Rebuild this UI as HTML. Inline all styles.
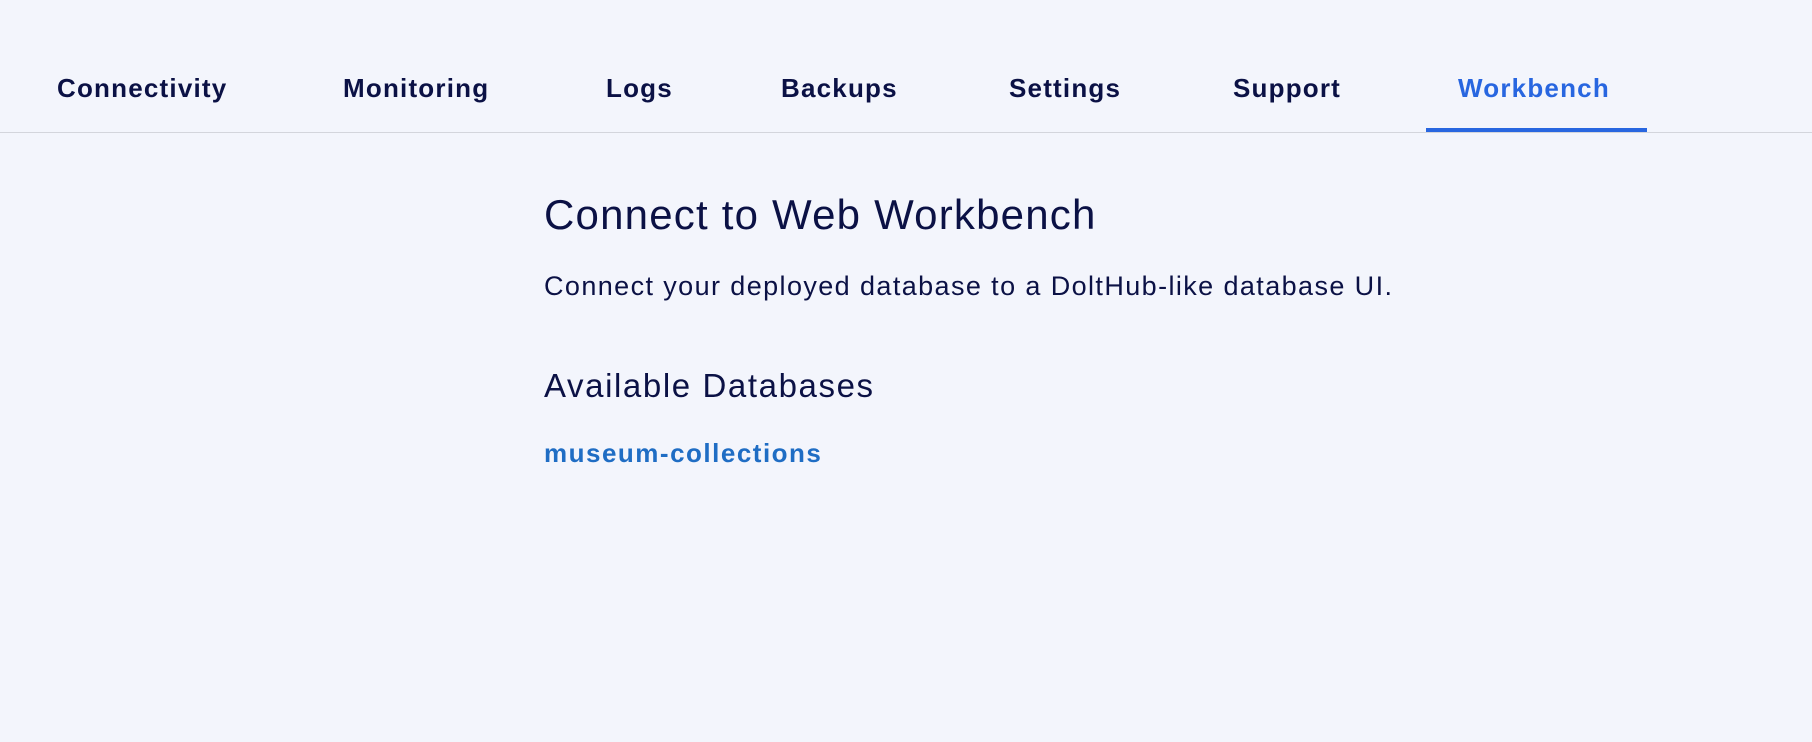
<!DOCTYPE html>
<html><head><meta charset="utf-8"><style>
html,body{margin:0;padding:0;width:1812px;height:742px;background:#f3f5fc;overflow:hidden;font-family:"Liberation Sans",sans-serif;color:#0b1145;}
.t{position:absolute;white-space:nowrap;line-height:1;}
.tab{font-weight:bold;font-size:26px;top:75px;letter-spacing:1.2px;}
</style></head><body>
<div class="t tab" style="left:57px">Connectivity</div>
<div class="t tab" style="left:343px">Monitoring</div>
<div class="t tab" style="left:606px">Logs</div>
<div class="t tab" style="left:781px">Backups</div>
<div class="t tab" style="left:1009px">Settings</div>
<div class="t tab" style="left:1233px">Support</div>
<div class="t tab" style="left:1458px;color:#2866e0">Workbench</div>
<div style="position:absolute;left:0;top:132px;width:1812px;height:1px;background:#d3d5dc"></div>
<div style="position:absolute;left:1426px;top:128px;width:221px;height:4px;background:#2866e0"></div>
<div class="t" style="left:544px;top:194px;font-size:42px;letter-spacing:1.2px">Connect to Web Workbench</div>
<div class="t" style="left:544px;top:273px;font-size:27px;letter-spacing:1.4px">Connect your deployed database to a DoltHub-like database UI.</div>
<div class="t" style="left:544px;top:369px;font-size:33px;letter-spacing:1.6px">Available Databases</div>
<div class="t" style="left:544px;top:440px;font-size:26px;font-weight:bold;color:#1f6dc4;letter-spacing:1.5px">museum-collections</div>
</body></html>
